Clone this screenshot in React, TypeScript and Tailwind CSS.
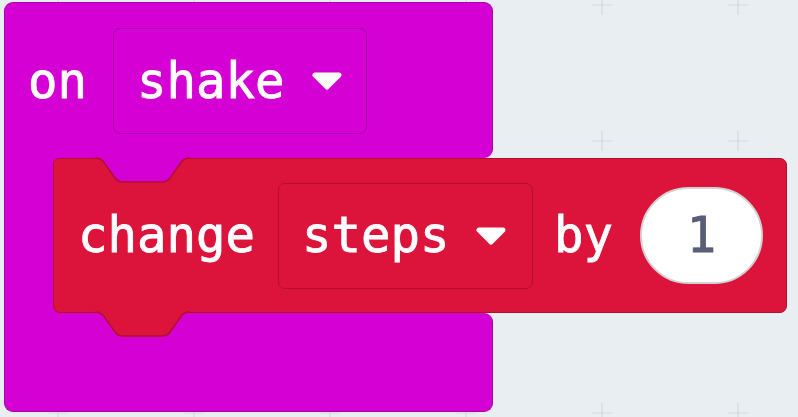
import React from "react";

const PURPLE = "#d400d4";
const PURPLE_EDGE = "#a900a9";
const RED = "#dc143c";
const RED_EDGE = "#b0102f";

// Trapezoid used for both the notch cut into the top of a statement
// block and the tab hanging from its bottom.
const NOTCH = "M0 0 C4 0 6 1 8 3 L20 20 C22 23 24 24 28 24 H67 C71 24 73 23 75 20 L87 3 C89 1 91 0 95 0 Z";
const NOTCH_EDGE = "M0 0 C4 0 6 1 8 3 L20 20 C22 23 24 24 28 24 H67 C71 24 73 23 75 20 L87 3 C89 1 91 0 95 0";

const Caret = () => (
  <svg width="32" height="18" viewBox="0 0 32 18" className="shrink-0">
    <path d="M4 3 H28 L16 15 Z" fill="white" stroke="white" strokeWidth="5" strokeLinejoin="round" />
  </svg>
);

const Notch = ({ fill, edge, className }: { fill: string; edge: string; className: string }) => (
  <svg width="96" height="26" viewBox="0 0 96 26" className={className} overflow="visible">
    <path d={NOTCH} fill={fill} />
    <path d={NOTCH_EDGE} fill="none" stroke={edge} strokeWidth="1.5" />
  </svg>
);

const GridBackdrop = () => (
  <svg className="absolute inset-0" width="798" height="417">
    <defs>
      <pattern id="crosses" x="58" y="5" width="136" height="136" patternUnits="userSpaceOnUse">
        <path
          d="M-10 0 H10 M0 -10 V10 M126 0 H146 M136 -10 V10 M-10 136 H10 M0 126 V146 M126 136 H146 M136 126 V146"
          stroke="#d3d9dd"
          strokeWidth="1.2"
        />
      </pattern>
    </defs>
    <rect x="0" y="0" width="798" height="417" fill="url(#crosses)" />
  </svg>
);

export default function App() {
  return (
    <div className="relative h-[417px] w-[798px] overflow-hidden bg-[#e9eef2] font-['DejaVu_Sans_Mono',monospace] text-[49px] leading-none text-white [-webkit-text-stroke:0.8px_white]">
      <GridBackdrop />

      {/* on shake: event block wrapping the statement */}
      <div className="relative flex w-[489px] flex-col pl-[4px] pt-[2px] box-content">
        <div
          className="flex h-[156px] w-[489px] items-start rounded-t-[9px] rounded-br-[9px] border border-b-0 pl-[23px] pt-[25px]"
          style={{ backgroundColor: PURPLE, borderColor: PURPLE_EDGE }}
        >
          <div className="flex h-[106px] items-center">
            <span className="mt-[1px]">on</span>
          </div>
          <div
            className="ml-[26px] flex h-[106px] w-[254px] items-center justify-between rounded-[7px] border-[1.5px] pl-[23px] pr-[23px]"
            style={{ backgroundColor: PURPLE, borderColor: PURPLE_EDGE }}
          >
            <span className="mt-[1px]">shake</span>
            <Caret />
          </div>
        </div>

        <div className="flex h-[155px] w-[489px] border-l" style={{ backgroundColor: PURPLE, borderColor: PURPLE_EDGE }}>
          {/* change steps by 1 */}
          <div
            className="relative ml-[48px] flex h-[155px] w-[734px] shrink-0 items-center rounded-[7px] rounded-tl-[6px] border pl-[24px]"
            style={{ backgroundColor: RED, borderColor: RED_EDGE }}
          >
            <Notch fill={PURPLE} edge={RED_EDGE} className="absolute left-[41px] top-[-1px]" />
            <span>change</span>
            <div
              className="ml-[23px] flex h-[106px] w-[255px] items-center justify-between rounded-[7px] border-[1.5px] pl-[23px] pr-[25px]"
              style={{ backgroundColor: RED, borderColor: RED_EDGE }}
            >
              <span>steps</span>
              <Caret />
            </div>
            <span className="ml-[21px]">by</span>
            <div className="ml-[27px] flex h-[97px] w-[123px] items-center justify-center rounded-full border-2 border-[#d2d2d2] bg-white text-[#575e75] [-webkit-text-stroke:0.8px_#575e75]">
              1
            </div>
            <Notch fill={RED} edge={RED_EDGE} className="absolute left-[41px] top-[153px]" />
          </div>
        </div>

        <div
          className="h-[99px] w-[489px] rounded-b-[9px] rounded-tr-[9px] border border-t-0"
          style={{ backgroundColor: PURPLE, borderColor: PURPLE_EDGE }}
        />
      </div>
    </div>
  );
}
